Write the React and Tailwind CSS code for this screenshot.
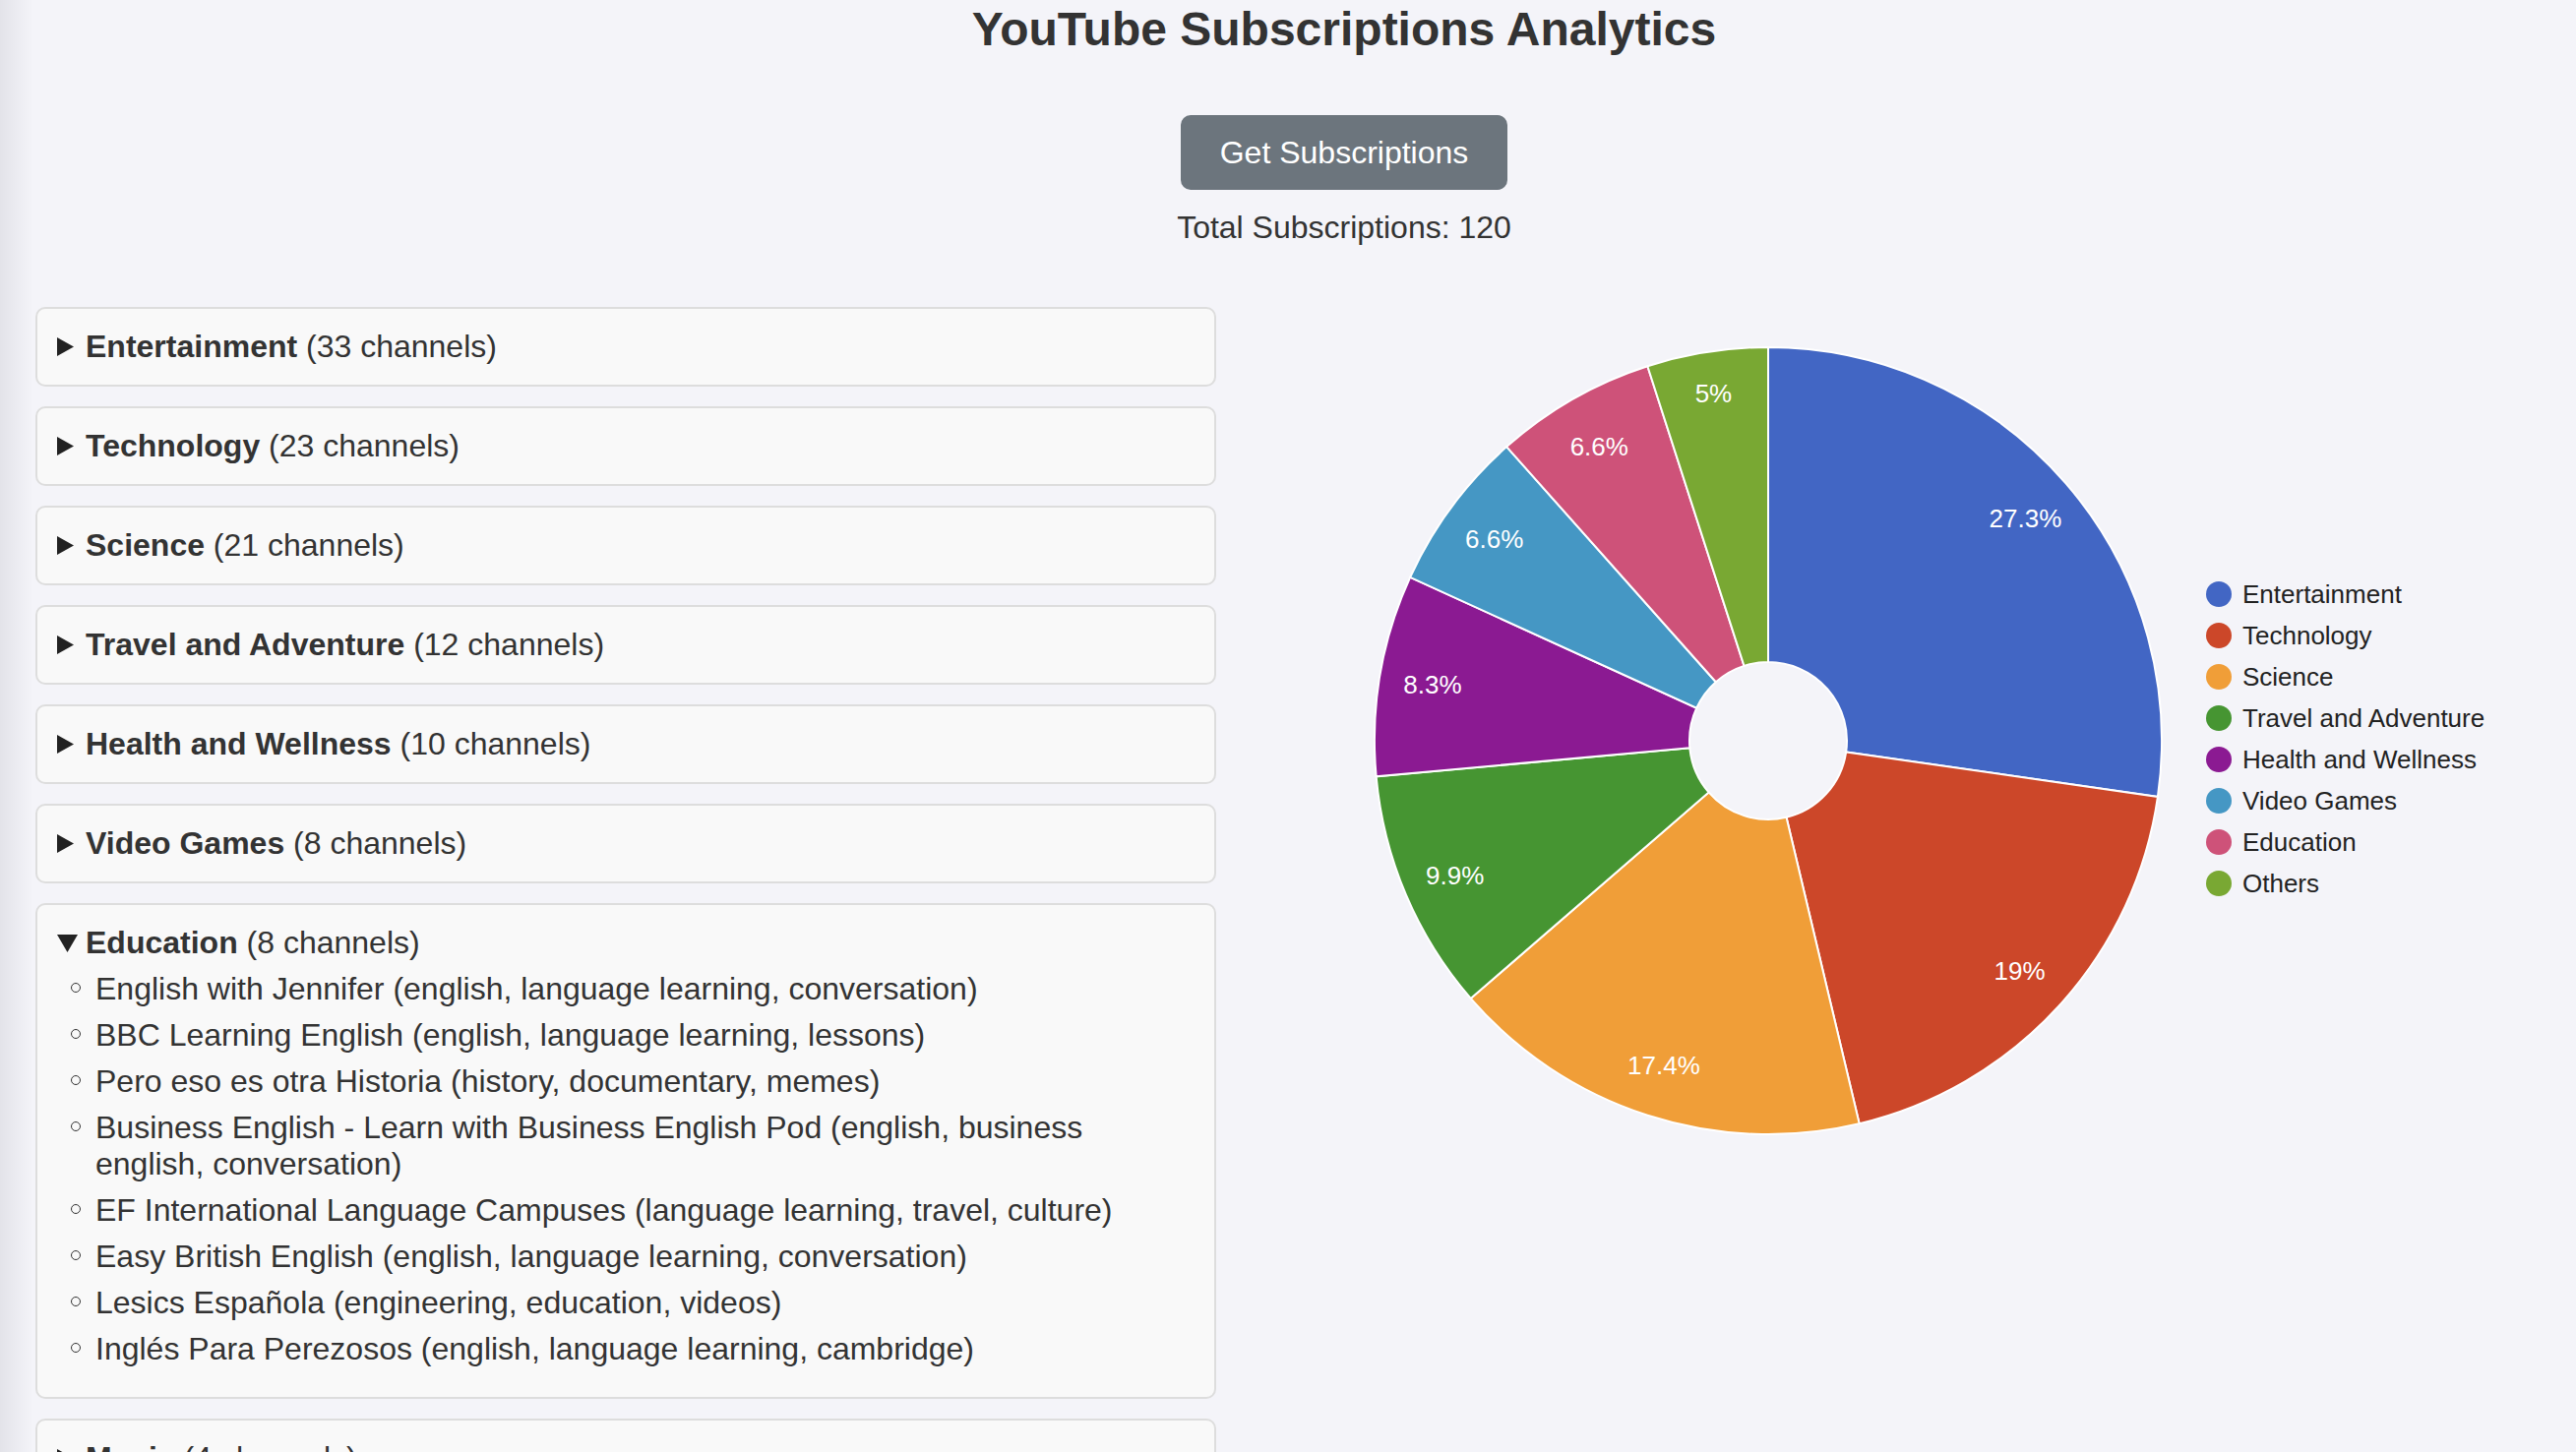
import { useState } from "react";

const CATEGORIES = [
  { name: "Entertainment", count: 33 },
  { name: "Technology", count: 23 },
  { name: "Science", count: 21 },
  { name: "Travel and Adventure", count: 12 },
  { name: "Health and Wellness", count: 10 },
  { name: "Video Games", count: 8 },
  {
    name: "Education",
    count: 8,
    channels: [
      { title: "English with Jennifer", tags: ["english", "language learning", "conversation"] },
      { title: "BBC Learning English", tags: ["english", "language learning", "lessons"] },
      { title: "Pero eso es otra Historia", tags: ["history", "documentary", "memes"] },
      {
        title: "Business English - Learn with Business English Pod",
        tags: ["english", "business english", "conversation"],
      },
      { title: "EF International Language Campuses", tags: ["language learning", "travel", "culture"] },
      { title: "Easy British English", tags: ["english", "language learning", "conversation"] },
      { title: "Lesics Española", tags: ["engineering", "education", "videos"] },
      { title: "Inglés Para Perezosos", tags: ["english", "language learning", "cambridge"] },
    ],
  },
  { name: "Music", count: 4 },
];

const SLICES = [
  { label: "Entertainment", value: 33, pct: "27.3%", color: "#4266c4" },
  { label: "Technology", value: 23, pct: "19%", color: "#cc4729" },
  { label: "Science", value: 21, pct: "17.4%", color: "#f09e38" },
  { label: "Travel and Adventure", value: 12, pct: "9.9%", color: "#469532" },
  { label: "Health and Wellness", value: 10, pct: "8.3%", color: "#8b1a92" },
  { label: "Video Games", value: 8, pct: "6.6%", color: "#4597c4" },
  { label: "Education", value: 8, pct: "6.6%", color: "#ce5279" },
  { label: "Others", value: 6, pct: "5%", color: "#79a833" },
];

const CX = 561;
const CY = 441;
const R = 400;
const HOLE = 80;

function pt(r, a) {
  return [CX + r * Math.sin(a), CY - r * Math.cos(a)];
}

function slicePath(a0, a1) {
  const large = a1 - a0 > Math.PI ? 1 : 0;
  const [x0, y0] = pt(R, a0);
  const [x1, y1] = pt(R, a1);
  const [x2, y2] = pt(HOLE, a1);
  const [x3, y3] = pt(HOLE, a0);
  return `M${x0} ${y0} A${R} ${R} 0 ${large} 1 ${x1} ${y1} L${x2} ${y2} A${HOLE} ${HOLE} 0 ${large} 0 ${x3} ${y3} Z`;
}

function PieChart() {
  const total = SLICES.reduce((s, d) => s + d.value, 0);
  let acc = 0;
  const parts = SLICES.map((d) => {
    const a0 = (acc / total) * Math.PI * 2;
    acc += d.value;
    const a1 = (acc / total) * Math.PI * 2;
    // the thin last slice gets its label pushed further out
    const [lx, ly] = pt(d.value < 7 ? 358 : 346, (a0 + a1) / 2);
    return { ...d, a0, a1, lx, ly };
  });

  return (
    <svg width="1382" height="860" className="block shrink-0" fontFamily="Liberation Sans, Arial, sans-serif">
      {parts.map((p) => (
        <path key={p.label} d={slicePath(p.a0, p.a1)} fill={p.color} stroke="#ffffff" strokeWidth="2" />
      ))}
      {parts.map((p) => (
        <text key={p.label + "-pct"} x={p.lx} y={p.ly + 10} textAnchor="middle" fontSize="26" fill="#ffffff">
          {p.pct}
        </text>
      ))}
      {parts.map((p, i) => (
        <g key={p.label + "-legend"}>
          <circle cx="1019" cy={292 + i * 42} r="13" fill={p.color} />
          <text x="1043" y={292 + i * 42 + 9} fontSize="26" fill="#222222">
            {p.label}
          </text>
        </g>
      ))}
    </svg>
  );
}

function Marker({ open }) {
  return (
    <span className="flex w-[29px] shrink-0 items-center">
      {open ? (
        <svg width="21" height="18" viewBox="0 0 21 18">
          <path d="M0 0 L21 0 L10.5 18 Z" fill="#222222" />
        </svg>
      ) : (
        <svg width="17" height="19" viewBox="0 0 17 19">
          <path d="M0 0 L17 9.5 L0 19 Z" fill="#222222" />
        </svg>
      )}
    </span>
  );
}

function CategoryCard({ category, open, onToggle }) {
  return (
    <div className="rounded-[10px] border-2 border-[#dddddd] bg-[#f9f9f9] p-[20px]">
      <button onClick={onToggle} className="flex w-full items-center text-left text-[32px] leading-[37px]">
        <Marker open={open} />
        <span>
          <span className="font-bold">{category.name}</span> ({category.count} channels)
        </span>
      </button>
      {open && category.channels && (
        <ul className="mb-[10px] mt-[10px] flex flex-col gap-[10px] pl-[14px] text-[32px] leading-[37px]">
          {category.channels.map((ch) => (
            <li key={ch.title} className="flex items-start">
              <span className="flex h-[37px] w-[25px] shrink-0 items-center">
                <span className="mt-[-4px] h-[10px] w-[10px] rounded-full border-[1.5px] border-[#333333]" />
              </span>
              <span>
                {ch.title} ({ch.tags.join(", ")})
              </span>
            </li>
          ))}
        </ul>
      )}
    </div>
  );
}

export default function App() {
  const [openName, setOpenName] = useState("Education");

  return (
    <main className="min-h-screen bg-[#f4f4f9] bg-[linear-gradient(to_right,#e3e3e9_0px,#f4f4f9_34px)] font-['Liberation_Sans',Arial,sans-serif] text-[#333333]">
      <header className="flex flex-col items-center pl-[114px] pt-[2px]">
        <h1 className="text-[48px] font-bold leading-[55px]">YouTube Subscriptions Analytics</h1>
        <button className="mt-[60px] rounded-[10px] bg-[#6c757d] px-[40px] py-[20px] text-[32px] leading-[36px] text-white">
          Get Subscriptions
        </button>
        <p className="mt-[20px] text-[32px] leading-[37px]">Total Subscriptions: 120</p>
      </header>

      <section className="mt-[62px] flex items-start pl-[36px]">
        <div className="flex w-[1200px] shrink-0 flex-col gap-[20px]">
          {CATEGORIES.map((cat) => (
            <CategoryCard
              key={cat.name}
              category={cat}
              open={openName === cat.name}
              onToggle={() => setOpenName(openName === cat.name ? "" : cat.name)}
            />
          ))}
        </div>
        <PieChart />
      </section>
    </main>
  );
}
